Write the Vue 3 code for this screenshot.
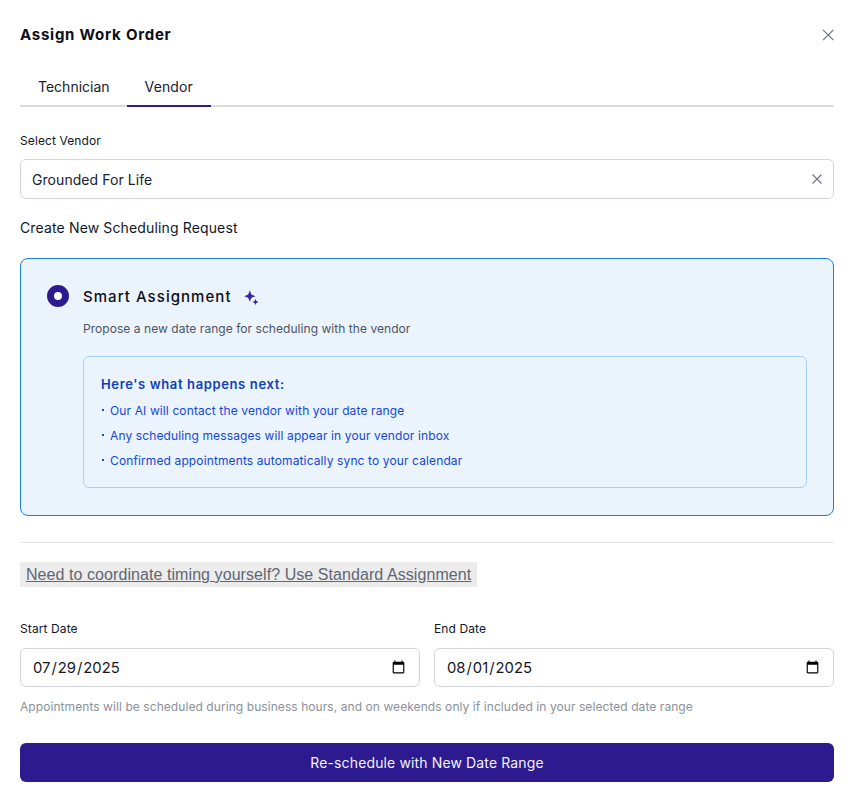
<script setup>
const tips = [
  'Our AI will contact the vendor with your date range',
  'Any scheduling messages will appear in your vendor inbox',
  'Confirmed appointments automatically sync to your calendar'
]
</script>

<template>
  <div class="modal">
    <header class="head">
      <h1 class="title">Assign Work Order</h1>
      <button class="close" aria-label="Close">
        <svg width="12" height="12" viewBox="0 0 12 12"><path d="M1 .8l10.4 10.4M11.4.8L1 11.2" stroke="#6b7280" stroke-width="1.2" fill="none"/></svg>
      </button>
    </header>

    <nav class="tabs">
      <span class="tab">Technician</span>
      <span class="tab active">Vendor</span>
    </nav>

    <label class="label vendor-label">Select Vendor</label>
    <div class="combo">
      <span>Grounded For Life</span>
      <svg width="10" height="10" viewBox="0 0 10 10"><path d="M.5.5l9 9M9.5.5l-9 9" stroke="#6b7280" stroke-width="1.1" fill="none"/></svg>
    </div>

    <p class="sub">Create New Scheduling Request</p>

    <section class="card">
      <div class="card-head">
        <span class="radio"></span>
        <span class="card-title">Smart Assignment</span>
        <svg class="spark" width="15" height="15" viewBox="0 0 15 15" fill="#3b22a8">
          <path d="M5.8.6l1.6 4 4 1.6-4 1.6-1.6 4-1.6-4-4-1.6 4-1.6z"/>
          <path d="M11.5 9l.9 2.1 2.1.9-2.1.9-.9 2.1-.9-2.1-2.1-.9 2.1-.9z"/>
        </svg>
      </div>
      <p class="card-desc">Propose a new date range for scheduling with the vendor</p>
      <div class="info">
        <h2 class="info-title">Here's what happens next:</h2>
        <p v-for="t in tips" :key="t" class="tip"><span class="dot"></span>{{ t }}</p>
      </div>
    </section>

    <hr class="rule" />

    <button class="link">Need to coordinate timing yourself? Use Standard Assignment</button>

    <div class="dates">
      <div class="field">
        <label class="label">Start Date</label>
        <input class="date" type="date" value="2025-07-29" />
      </div>
      <div class="field">
        <label class="label">End Date</label>
        <input class="date" type="date" value="2025-08-01" />
      </div>
    </div>
    <p class="help">Appointments will be scheduled during business hours, and on weekends only if included in your selected date range</p>

    <button class="submit">Re-schedule with New Date Range</button>
  </div>
</template>

<style scoped>
.modal {
  box-sizing: border-box;
  width: 854px;
  height: 802px;
  padding: 24px 20px 0;
  background: #fff;
  font-family: Inter, "Liberation Sans", sans-serif;
  color: #111827;
  overflow: hidden;
}
.head {
  display: flex;
  justify-content: space-between;
  align-items: center;
  height: 21px;
}
.title {
  margin: 0;
  font-size: 15px;
  line-height: 21px;
  font-weight: 700;
  letter-spacing: 0.75px;
  color: #0b0f19;
}
.close {
  display: flex;
  padding: 0;
  border: 0;
  background: none;
}
.tabs {
  display: flex;
  margin-top: 24px;
  height: 36px;
  border-bottom: 2px solid #d9dde2;
}
.tab {
  box-sizing: border-box;
  height: 38px;
  padding: 0 18px;
  font-size: 14px;
  line-height: 36px;
  color: #1a202c;
}
.tab.active {
  border-bottom: 2px solid #2c1a8e;
  padding: 0 18px;
  margin-left: -1px;
  letter-spacing: 0.1px;
}
.label {
  display: block;
  font-size: 12px;
  line-height: 16px;
  letter-spacing: 0.1px;
  color: #111827;
}
.vendor-label {
  margin-top: 26px;
}
.combo {
  box-sizing: border-box;
  display: flex;
  justify-content: space-between;
  align-items: center;
  height: 40px;
  margin-top: 10px;
  padding: 0 11px;
  border: 1px solid #d1d5db;
  border-radius: 6px;
  font-size: 14px;
  letter-spacing: 0.06px;
  color: #1a202c;
}
.sub {
  margin: 20px 0 0;
  font-size: 14px;
  line-height: 18px;
  letter-spacing: 0.14px;
  color: #111827;
}
.card {
  box-sizing: border-box;
  height: 258px;
  margin-top: 21px;
  padding: 26px 26px 0;
  border: 1px solid #1a7ef0;
  border-radius: 8px;
  background: #ebf3fd;
}
.card-head {
  display: flex;
  align-items: center;
  height: 22px;
}
.radio {
  box-sizing: border-box;
  flex: none;
  width: 22px;
  height: 22px;
  border: 7px solid #2c1a8e;
  border-radius: 50%;
  background: #fff;
}
.card-title {
  margin-left: 14px;
  font-size: 15px;
  font-weight: 500;
  letter-spacing: 1.05px;
  color: #0b0f19;
}
.spark {
  margin-left: 12px;
  margin-top: 2px;
}
.card-desc {
  margin: 14px 0 0 36px;
  font-size: 12px;
  line-height: 16px;
  letter-spacing: 0.05px;
  color: #4b5563;
}
.info {
  box-sizing: border-box;
  height: 132px;
  margin: 19px 0 0 36px;
  padding: 19px 17px 0;
  border: 1px solid #a9d1f7;
  border-radius: 6px;
}
.info-title {
  margin: 0 0 5.5px;
  font-size: 13px;
  line-height: 16px;
  font-weight: 600;
  letter-spacing: 0.63px;
  color: #0f3fb8;
}
.tip {
  display: flex;
  align-items: center;
  margin: 0;
  font-size: 12px;
  line-height: 25px;
  letter-spacing: 0.12px;
  color: #1548d8;
}
.dot {
  flex: none;
  width: 2px;
  height: 2px;
  margin: 0 6px 0 1px;
  background: #1548d8;
}
.rule {
  margin: 26px 0 0;
  border: 0;
  border-top: 1px solid #e5e7eb;
}
.link {
  display: block;
  height: 25px;
  margin-top: 19px;
  padding: 0 6px;
  border: 0;
  background: #ececec;
  font-family: "Liberation Sans", Arial, sans-serif;
  font-size: 16px;
  letter-spacing: 0.07px;
  color: #5f6673;
  text-decoration: underline;
}
.dates {
  display: grid;
  grid-template-columns: 400px 400px;
  gap: 14px;
  margin-top: 34px;
}
.date {
  box-sizing: border-box;
  display: block;
  width: 100%;
  height: 39px;
  margin-top: 11px;
  padding: 0 11.5px 0 11px;
  border: 1px solid #d1d5db;
  border-radius: 6px;
  background: #fff;
  font-family: Inter, sans-serif;
  font-size: 14.8px;
  color: #111827;
}
.help {
  margin: 12px 0 0;
  font-size: 12px;
  line-height: 16px;
  letter-spacing: 0.07px;
  color: #8a919c;
}
.submit {
  display: block;
  width: 100%;
  height: 39px;
  margin-top: 28px;
  border: 0;
  border-radius: 6px;
  background: #2c1a8e;
  font-family: Inter, sans-serif;
  font-size: 14px;
  letter-spacing: 0.13px;
  color: #f3f2fb;
}
</style>
